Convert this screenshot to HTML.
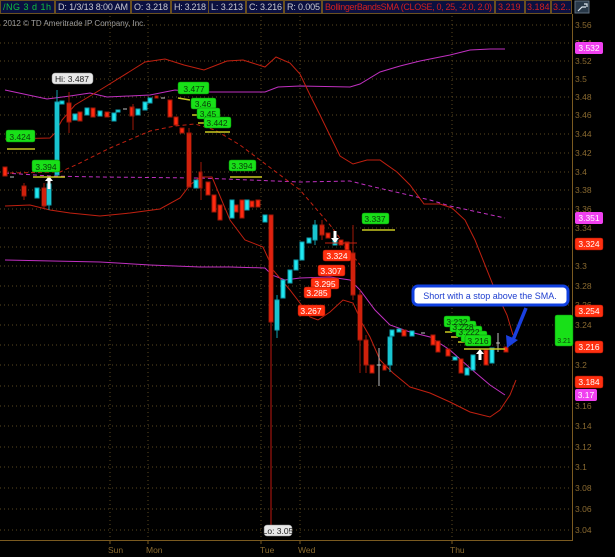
<!DOCTYPE html>
<html><head><meta charset="utf-8"><style>
html,body{margin:0;padding:0;background:#000;}
svg{display:block;font-family:"Liberation Sans",sans-serif;}
</style></head><body>
<svg width="615" height="557" viewBox="0 0 615 557" xmlns="http://www.w3.org/2000/svg">
<rect width="615" height="557" fill="#000"/>
<!-- header -->
<rect x="0" y="0" width="572" height="14" fill="#0b1040"/>
<g stroke="#6a5020" stroke-width="1" fill="none">
<rect x="0.5" y="0.5" width="54" height="13"/><rect x="55.5" y="0.5" width="75" height="13"/><rect x="131.5" y="0.5" width="39" height="13"/><rect x="171.5" y="0.5" width="37" height="13"/><rect x="208.5" y="0.5" width="37" height="13"/><rect x="246.5" y="0.5" width="37" height="13"/><rect x="284.5" y="0.5" width="37" height="13"/><rect x="322.5" y="0.5" width="172" height="13"/><rect x="495.5" y="0.5" width="29" height="13"/><rect x="525.5" y="0.5" width="25" height="13"/><rect x="551.5" y="0.5" width="20" height="13"/>
</g>
<g font-size="9" fill="#c8c8d0">
<text x="3" y="10" fill="#10c040" textLength="48">/NG 3 d 1h</text>
<text x="58" y="10" textLength="70">D: 1/3/13 8:00 AM</text>
<text x="134" y="10" textLength="34">O: 3.218</text>
<text x="174" y="10" textLength="32">H: 3.218</text>
<text x="211" y="10" textLength="32">L: 3.213</text>
<text x="249" y="10" textLength="33">C: 3.216</text>
<text x="287" y="10" textLength="33">R: 0.005</text>
<text x="325" y="10" fill="#d02020" textLength="167">BollingerBandsSMA (CLOSE, 0, 25, -2.0, 2.0)</text>
<text x="498" y="10" fill="#d02020">3.219</text>
<text x="527" y="10" fill="#d02020">3.184</text>
<text x="553" y="10" fill="#d02020">3.2..</text>
</g>
<rect x="575" y="1" width="14" height="12" fill="#283848" stroke="#607080"/>
<path d="M578 11 L582 7 L586 7 M584 4 L587 4 L587 7" stroke="#e0e8f0" stroke-width="1.2" fill="none"/>
<text x="3" y="26" font-size="8" fill="#a0a0a0">2012 © TD Ameritrade IP Company, Inc.</text>
<!-- grid -->
<g stroke="#5a4820" stroke-width="1" stroke-dasharray="1,3">
<line x1="0" x2="570" y1="25" y2="25"/><line x1="0" x2="570" y1="43" y2="43"/><line x1="0" x2="570" y1="61" y2="61"/><line x1="0" x2="570" y1="79" y2="79"/><line x1="0" x2="570" y1="97" y2="97"/><line x1="0" x2="570" y1="115" y2="115"/><line x1="0" x2="570" y1="134" y2="134"/><line x1="0" x2="570" y1="153" y2="153"/><line x1="0" x2="570" y1="172" y2="172"/><line x1="0" x2="570" y1="190" y2="190"/><line x1="0" x2="570" y1="209" y2="209"/><line x1="0" x2="570" y1="228" y2="228"/><line x1="0" x2="570" y1="247" y2="247"/><line x1="0" x2="570" y1="266" y2="266"/><line x1="0" x2="570" y1="286" y2="286"/><line x1="0" x2="570" y1="305" y2="305"/><line x1="0" x2="570" y1="325" y2="325"/><line x1="0" x2="570" y1="345" y2="345"/><line x1="0" x2="570" y1="365" y2="365"/><line x1="0" x2="570" y1="386" y2="386"/><line x1="0" x2="570" y1="406" y2="406"/><line x1="0" x2="570" y1="426" y2="426"/><line x1="0" x2="570" y1="447" y2="447"/><line x1="0" x2="570" y1="467" y2="467"/><line x1="0" x2="570" y1="488" y2="488"/><line x1="0" x2="570" y1="509" y2="509"/><line x1="0" x2="570" y1="530" y2="530"/>
<line x1="110" x2="110" y1="16" y2="540"/><line x1="148" x2="148" y1="16" y2="540"/><line x1="261" x2="261" y1="16" y2="540"/><line x1="300" x2="300" y1="16" y2="540"/><line x1="452" x2="452" y1="16" y2="540"/>
</g>
<g stroke="#7a5a20"><line x1="572.5" y1="14" x2="572.5" y2="541"/><line x1="0" y1="540.5" x2="573" y2="540.5"/>
<line x1="110" x2="110" y1="540" y2="544"/><line x1="148" x2="148" y1="540" y2="544"/><line x1="261" x2="261" y1="540" y2="544"/><line x1="300" x2="300" y1="540" y2="544"/><line x1="452" x2="452" y1="540" y2="544"/></g>
<g font-size="8.5" fill="#8a6a30">
<text x="575" y="28">3.56</text><text x="575" y="46">3.54</text><text x="575" y="64">3.52</text><text x="575" y="82">3.5</text><text x="575" y="100">3.48</text><text x="575" y="118">3.46</text><text x="575" y="137">3.44</text><text x="575" y="156">3.42</text><text x="575" y="175">3.4</text><text x="575" y="193">3.38</text><text x="575" y="212">3.36</text><text x="575" y="231">3.34</text><text x="575" y="269">3.3</text><text x="575" y="289">3.28</text><text x="575" y="308">3.26</text><text x="575" y="328">3.24</text><text x="575" y="368">3.2</text><text x="575" y="409">3.16</text><text x="575" y="429">3.14</text><text x="575" y="450">3.12</text><text x="575" y="470">3.1</text><text x="575" y="491">3.08</text><text x="575" y="512">3.06</text><text x="575" y="533">3.04</text>
<text x="108" y="553">Sun</text><text x="146" y="553">Mon</text><text x="260" y="553">Tue</text><text x="298" y="553">Wed</text><text x="450" y="553">Thu</text>
</g>
<!-- bands -->
<g fill="none" stroke-width="1">
<polyline stroke="#c030c0" points="5,90 47,99 70,96 90,93 107,97 150,95 175,90 195,92 220,92 265,92 278,87 300,86 350,87 360,84 380,72 400,66 420,61 450,55 470,50 490,49 505,49"/>
<polyline stroke="#c030c0" points="5,260 100,262 150,265 200,267 230,267 265,268 272,275 285,280 300,278 330,277 350,280 360,290 375,310 390,325 410,332 430,337 450,350 470,368 490,385 505,395"/>
<polyline stroke="#c030c0" stroke-dasharray="4,3" points="5,173 50,176 100,177 200,178 300,182 350,181 370,186 400,193 430,200 450,206 505,218"/>
<polyline stroke="#c02010" stroke-dasharray="4,3" points="10,173 60,172 80,163 110,148 150,131 175,126 195,124 215,130 240,145 260,160 300,190 330,225 360,265"/>
<polyline stroke="#c02010" points="5,139 50,138 55,133 62,120 75,105 100,90 129,72 145,62 165,59 184,65 204,70 227,61 243,60 265,67 276,57 290,63 300,74 310,95 320,115 340,156 353,164 367,160 380,160 397,172 410,185 424,204 440,204 452,208 465,220 475,240 495,290 507,315 513,335"/>
<polyline stroke="#c02010" points="5,206 30,205 50,210 70,213 100,216 130,213 160,209 180,198 190,185 200,177 212,177 230,220 245,240 263,247 268,258 273,270 290,290 303,307 310,317 318,320 330,312 343,300 353,303 362,323 370,337 380,360 393,373 410,387 430,393 450,402 470,412 490,417 500,410 510,395 516,380"/>
</g>
<!-- candles -->
<g stroke-width="1">
<g fill="#ff2a10" stroke="#a01808">
<rect x="3" y="167" width="4" height="9"/><rect x="22" y="186" width="4" height="10"/><rect x="42" y="188" width="4" height="18"/><rect x="67" y="103" width="4" height="19"/><rect x="78" y="112" width="4" height="9"/><rect x="91" y="108" width="4" height="9"/><rect x="105" y="112" width="4" height="5"/><rect x="130" y="107" width="4" height="9"/><rect x="155" y="96" width="3" height="2"/><rect x="168" y="100" width="4" height="17"/><rect x="174" y="117" width="4" height="8"/><rect x="180" y="128" width="4" height="5"/><rect x="187" y="133" width="4" height="54"/><rect x="199" y="172" width="3" height="16"/><rect x="206" y="182" width="4" height="13"/><rect x="212" y="195" width="4" height="17"/><rect x="218" y="205" width="4" height="15"/><rect x="234" y="205" width="4" height="7"/><rect x="240" y="200" width="4" height="18"/><rect x="250" y="201" width="4" height="6"/><rect x="256" y="200" width="4" height="7"/><rect x="269" y="215" width="4" height="107"/><rect x="320" y="225" width="4" height="10"/><rect x="326" y="233" width="4" height="5"/><rect x="339" y="240" width="4" height="5"/><rect x="345" y="242" width="4" height="8"/><rect x="351" y="253" width="4" height="42"/><rect x="358" y="295" width="4" height="45"/><rect x="364" y="340" width="4" height="25"/><rect x="370" y="365" width="4" height="8"/><rect x="383" y="365" width="3" height="5"/><rect x="402" y="330" width="4" height="6"/><rect x="431" y="335" width="4" height="10"/><rect x="436" y="341" width="4" height="11"/><rect x="446" y="349" width="4" height="7"/><rect x="459" y="359" width="4" height="14"/><rect x="484" y="350" width="4" height="15"/><rect x="504" y="347" width="4" height="5"/>
</g>
<g stroke="#a01808"><line x1="24" y1="183" x2="24" y2="200"/><line x1="44" y1="183" x2="44" y2="208"/><line x1="69" y1="92" x2="69" y2="133"/><line x1="133" y1="104" x2="133" y2="130"/><line x1="189" y1="128" x2="189" y2="187"/><line x1="201" y1="162" x2="201" y2="200"/><line x1="271" y1="215" x2="271" y2="528" stroke="#c01810"/><line x1="353" y1="225" x2="353" y2="300"/><line x1="360" y1="290" x2="360" y2="373"/><line x1="366" y1="335" x2="366" y2="373"/><line x1="322" y1="220" x2="322" y2="240"/></g>
<g fill="#20e8f0" stroke="#10a0b0">
<rect x="35" y="188" width="4" height="10"/><rect x="47" y="184" width="4" height="21"/><rect x="55" y="102" width="4" height="73"/><rect x="60" y="101" width="4" height="3"/><rect x="73" y="114" width="4" height="6"/><rect x="85" y="108" width="4" height="7"/><rect x="98" y="111" width="4" height="5"/><rect x="112" y="113" width="4" height="8"/><rect x="116" y="110" width="4" height="2"/><rect x="136" y="109" width="4" height="6"/><rect x="143" y="102" width="4" height="8"/><rect x="148" y="98" width="4" height="5"/><rect x="194" y="180" width="4" height="8"/><rect x="230" y="200" width="4" height="18"/><rect x="245" y="200" width="4" height="10"/><rect x="263" y="215" width="4" height="7"/><rect x="275" y="300" width="4" height="30"/><rect x="281" y="280" width="4" height="18"/><rect x="288" y="270" width="4" height="13"/><rect x="294" y="260" width="4" height="10"/><rect x="300" y="242" width="4" height="18"/><rect x="307" y="238" width="4" height="5"/><rect x="313" y="225" width="4" height="15"/><rect x="333" y="240" width="4" height="5"/><rect x="388" y="337" width="4" height="28"/><rect x="390" y="330" width="4" height="6"/><rect x="397" y="329" width="4" height="3"/><rect x="410" y="331" width="4" height="5"/><rect x="453" y="357" width="4" height="3"/><rect x="465" y="368" width="4" height="7"/><rect x="471" y="355" width="4" height="15"/><rect x="490" y="348" width="4" height="15"/>
</g>
<g stroke="#10a0b0"><line x1="57" y1="90" x2="57" y2="175"/><line x1="49" y1="180" x2="49" y2="210"/><line x1="277" y1="295" x2="277" y2="338"/><line x1="315" y1="220" x2="315" y2="245"/><line x1="390" y1="330" x2="390" y2="372"/></g>
<g stroke="#c0c0c0"><line x1="10" y1="177" x2="14" y2="177"/><line x1="123" y1="109" x2="127" y2="109"/><line x1="161" y1="98" x2="165" y2="98"/><line x1="377" y1="365" x2="381" y2="365"/><line x1="421" y1="333" x2="425" y2="333"/><line x1="498" y1="333" x2="498" y2="352"/><line x1="496" y1="343" x2="500" y2="343"/><line x1="379" y1="348" x2="379" y2="386"/></g>
</g>
<!-- arrows -->
<path d="M49 176 l4 5 h-2.5 v8 h-3 v-8 h-2.5 z" fill="#fff"/>
<path d="M480 349 l4 5 h-2.5 v6 h-3 v-6 h-2.5 z" fill="#fff"/>
<path d="M335 243 l4 -5 h-2.5 v-7 h-3 v7 h-2.5 z" fill="#fff"/>
<!-- yellow lines -->
<g stroke="#c8c820" stroke-width="1.5">
<line x1="7" y1="149" x2="35" y2="149"/><line x1="33" y1="177" x2="65" y2="177"/><line x1="178" y1="98" x2="190" y2="100"/><line x1="192" y1="115" x2="200" y2="115"/><line x1="198" y1="123" x2="206" y2="123"/><line x1="205" y1="132" x2="230" y2="132"/><line x1="230" y1="177" x2="262" y2="177"/><line x1="362" y1="230" x2="395" y2="230"/><line x1="445" y1="332" x2="452" y2="332"/><line x1="451" y1="337" x2="458" y2="337"/><line x1="458" y1="342" x2="465" y2="342"/><line x1="464" y1="349" x2="505" y2="349"/>
</g>
<!-- labels -->
<g font-size="8.5" text-anchor="middle">
<g fill="#18e018" stroke="#0a8a0a" stroke-width="0.5">
<rect x="6" y="130" width="29" height="12" rx="2"/><rect x="32" y="160" width="28" height="12" rx="2"/><rect x="178" y="82" width="31" height="12" rx="2"/><rect x="191" y="98" width="25" height="11" rx="2"/><rect x="197" y="108" width="23" height="11" rx="2"/><rect x="204" y="117" width="27" height="11" rx="2"/><rect x="229" y="160" width="27" height="11" rx="2"/><rect x="362" y="213" width="27" height="11" rx="2"/>
<rect x="444" y="316" width="26" height="11" rx="2"/><rect x="450" y="321" width="26" height="11" rx="2"/><rect x="456" y="326" width="26" height="11" rx="2"/><rect x="461" y="331" width="26" height="11" rx="2"/><rect x="465" y="335" width="26" height="11" rx="2"/>
<rect x="555" y="315" width="18" height="31" rx="2"/>
</g>
<g fill="#0a3a0a">
<text x="20" y="140">3.424</text><text x="46" y="170">3.394</text><text x="194" y="92">3.477</text><text x="203" y="107">3.46</text><text x="208" y="117">3.45</text><text x="217" y="126">3.442</text><text x="242" y="169">3.394</text><text x="375" y="222">3.337</text>
<text x="457" y="325">3.232</text><text x="463" y="330">3.228</text><text x="469" y="335">3.222</text>
<text x="478" y="344">3.216</text><text x="564" y="343" font-size="7">3.21</text>
</g>
<g fill="#ff3010" stroke="#a01000" stroke-width="0.5">
<rect x="323" y="250" width="28" height="11" rx="2"/><rect x="318" y="265" width="27" height="11" rx="2"/><rect x="311" y="278" width="28" height="11" rx="2"/><rect x="304" y="287" width="27" height="11" rx="2"/><rect x="298" y="305" width="27" height="11" rx="2"/>
<rect x="575" y="238" width="28" height="12" rx="2"/><rect x="575" y="305" width="28" height="12" rx="2"/><rect x="575" y="341" width="28" height="12" rx="2"/><rect x="575" y="376" width="28" height="12" rx="2"/>
</g>
<g fill="#fff">
<text x="337" y="259">3.324</text><text x="331" y="274">3.307</text><text x="325" y="287">3.295</text><text x="317" y="296">3.285</text><text x="311" y="314">3.267</text>
<text x="589" y="247">3.324</text><text x="589" y="314">3.254</text><text x="589" y="350">3.216</text><text x="589" y="385">3.184</text>
</g>
<g fill="#f040f0"><rect x="575" y="42" width="28" height="12" rx="2"/><rect x="575" y="212" width="28" height="12" rx="2"/><rect x="575" y="389" width="22" height="12" rx="2"/></g>
<g fill="#fff"><text x="589" y="51">3.532</text><text x="589" y="221">3.351</text><text x="586" y="398">3.17</text></g>
<g fill="#e8e8e8" stroke="#909090" stroke-width="0.5"><rect x="52" y="73" width="41" height="11" rx="3"/><rect x="264" y="525" width="28" height="11" rx="3"/></g>
<g fill="#202020"><text x="72" y="82">Hi: 3.487</text><text x="278" y="534">Lo: 3.05</text></g>
</g>
<g stroke="#c02010"><line x1="325" y1="243" x2="357" y2="243"/></g>
<!-- callout -->
<rect x="413" y="286" width="155" height="19" rx="5" fill="#fff" stroke="#1040e0" stroke-width="3"/>
<text x="490" y="299" font-size="9" text-anchor="middle" fill="#2040d0">Short with a stop above the SMA.</text>
<path d="M526 308 L513 340" stroke="#1a40e0" stroke-width="3.5" fill="none"/>
<path d="M507 348 L506 335 L518 340 Z" fill="#1a40e0"/>
</svg>
</body></html>
